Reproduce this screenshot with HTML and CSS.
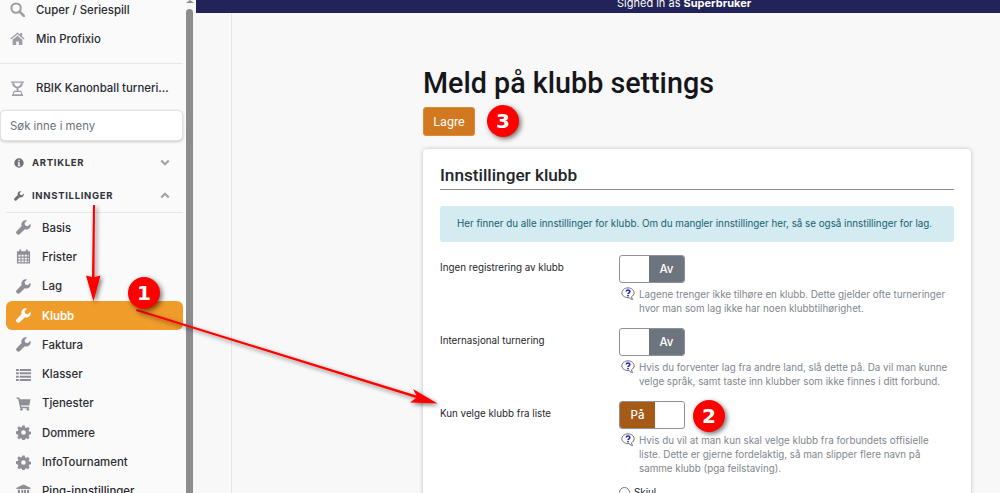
FILE: index.html
```html
<!DOCTYPE html>
<html>
<head>
  <meta charset="UTF-8" />
  <title>Meld på klubb settings</title>
  <link rel="stylesheet" href="styles.css">
</head>
<body>
  <svg class="icon-defs" width="0" height="0">
    <defs>
      <symbol id="i-search" viewBox="0 0 16 16"><circle cx="6.5" cy="6.5" r="5" fill="none" stroke="currentColor" stroke-width="2.2"/><path d="M10.3 10.3 15 15" stroke="currentColor" stroke-width="2.8" stroke-linecap="round"/></symbol>
      <symbol id="i-home" viewBox="0 0 16 16"><path fill="currentColor" d="M8 1.5.4 8l.8 1L8 3.4 14.8 9l.8-1-2.6-2.2V2.2h-2v1.9zM2.8 9.4V15h3.8v-3.8h2.8V15h3.8V9.4L8 5z"/></symbol>
      <symbol id="i-trophy" viewBox="0 0 16 16"><path fill="none" stroke="currentColor" stroke-width="1.2" d="M1 1.200h14M3 1.200c0 2.800 0 5.300 5 6.300 5-1 5-3.500 5-6.300M4 2.500c0 2 .5 3.500 4 4.300 3.500-.8 4-2.300 4-4.300"/><path fill="currentColor" d="M7 7.500h2v3H7z"/><path fill="none" stroke="currentColor" stroke-width="1.200" d="M4.500 11h7l1.500 3.800H3zM2 15.300h12"/></symbol>
      <symbol id="i-info" viewBox="0 0 16 16"><path fill="currentColor" fill-rule="evenodd" d="M8 .5a7.500 7.500 0 1 0 0 15 7.500 7.500 0 0 0 0-15zM6.800 2.800h2.400v2.400H6.800zM5.800 6.600h3.400v5h1v1.600H5.800v-1.600h1v-3.400h-1z"/></symbol>
      <symbol id="i-wrench" viewBox="0 0 16 16"><path fill="currentColor" d="M15.300 3.900 12.500 6.600 9.800 5.900 9.100 3.300 11.900.6A4.600 4.600 0 0 0 6 6.500L.9 11.600a2.100 2.100 0 0 0 3.300 3.300L9.400 9.900a4.600 4.600 0 0 0 5.900-6z"/></symbol>
      <symbol id="i-calendar" viewBox="0 0 16 16"><path fill="currentColor" fill-rule="evenodd" d="M3.500.500h2v2h5v-2h2v2H15v13H1v-13h2.500zM2.500 6v2h2.300V6zm3.400 0v2h2.300V6zm3.400 0v2h2.300V6zm3.300 0v2h.9V6zM2.500 9.200v2h2.300v-2zm3.400 0v2h2.300v-2zm3.400 0v2h2.300v-2zm3.300 0v2h.9v-2zM2.500 12.300v1.800h2.300v-1.800zm3.400 0v1.800h2.300v-1.800zm3.400 0v1.800h2.300v-1.800zm3.300 0v1.800h.9v-1.800z"/></symbol>
      <symbol id="i-list" viewBox="0 0 16 16"><path fill="currentColor" d="M0 2h3v2.200H0zM4 2h12v2.200H4zM0 5.600h3v2.200H0zM4 5.600h12v2.200H4zM0 9.200h3v2.200H0zM4 9.200h12v2.200H4zM0 12.800h3V15H0zM4 12.800h12V15H4z"/></symbol>
      <symbol id="i-cart" viewBox="0 0 16 16"><path fill="currentColor" d="M.5 1.500h3l.5 2h11.500l-1.300 6.500H5.500l.3 1.500h8.200v1.500H4.500L2.300 3H.5z"/><circle cx="5.800" cy="14.200" r="1.400" fill="currentColor"/><circle cx="12.600" cy="14.200" r="1.400" fill="currentColor"/></symbol>
      <symbol id="i-gear" viewBox="0 0 16 16"><path fill="currentColor" fill-rule="evenodd" d="M6.700.5h2.600l.4 2.100 1.300.6 1.800-1.200 1.800 1.800-1.200 1.800.6 1.300 2.100.4v2.600l-2.100.4-.6 1.300 1.200 1.800-1.800 1.800-1.800-1.200-1.300.6-.4 2.100H6.700l-.4-2.100-1.300-.6-1.800 1.200-1.800-1.800 1.200-1.800-.6-1.300L-.1 9.300V6.700L2 6.300l.6-1.300L1.400 3.200l1.800-1.800L5 2.600l1.300-.6zM8 5.500a2.500 2.500 0 1 0 0 5 2.500 2.500 0 0 0 0-5z"/></symbol>
      <symbol id="i-bank" viewBox="0 0 16 16"><path fill="currentColor" d="M8 .5 15.500 4v1.200H.5V4zM2 6h2.200v6H2zM5.700 6h2v6h-2zM8.600 6h2v6h-2zM11.800 6H14v6h-2.200zM1 13h14v2H1z"/></symbol>
      <symbol id="i-help" viewBox="0 0 16 16"><path fill="#fff" stroke="#666" stroke-width="1.100" d="M8 1c3.900 0 7 2.500 7 5.600 0 2-1.200 3.600-3 4.600.1 1.200.6 2.300 1.400 3.100-1.700-.2-3.300-1-4.300-2.200H8C4.100 12.100 1 9.700 1 6.600S4.100 1 8 1z"/><path fill="none" stroke="#1a22c8" stroke-width="1.700" d="M5.900 5.100c.2-2.200 4.200-2.200 4.200 0 0 1.500-2.100 1.500-2.100 3"/><rect x="7.100" y="9" width="1.800" height="1.700" fill="#1a22c8"/></symbol>
    </defs>
  </svg>

  <div class="page">
    <aside class="sidebar">
      <nav class="top-links">
        <a class="top-link"><svg class="ico ico-light"><use href="#i-search"/></svg>Cuper / Seriespill</a>
        <a class="top-link"><svg class="ico ico-light"><use href="#i-home"/></svg>Min Profixio</a>
      </nav>
      <div class="tournament"><svg class="ico ico-light"><use href="#i-trophy"/></svg>RBIK Kanonball turneri...</div>
      <input class="menu-search" type="text" placeholder="Søk inne i meny">
      <div class="section-head">
        <svg class="ico-sm"><use href="#i-info"/></svg><span>ARTIKLER</span>
        <svg class="chev" viewBox="0 0 12 8"><path d="M1.500 1.500 6 6l4.500-4.500" fill="none" stroke="currentColor" stroke-width="2.600"/></svg>
      </div>
      <div class="section-head open">
        <svg class="ico-sm"><use href="#i-wrench"/></svg><span>INNSTILLINGER</span>
        <svg class="chev" viewBox="0 0 12 8"><path d="M1.500 6.500 6 2l4.500 4.500" fill="none" stroke="currentColor" stroke-width="2.600"/></svg>
      </div>
      <ul class="menu">
        <li><svg class="ico"><use href="#i-wrench"/></svg>Basis</li>
        <li><svg class="ico"><use href="#i-calendar"/></svg>Frister</li>
        <li><svg class="ico"><use href="#i-wrench"/></svg>Lag</li>
        <li class="active"><svg class="ico"><use href="#i-wrench"/></svg>Klubb</li>
        <li><svg class="ico"><use href="#i-wrench"/></svg>Faktura</li>
        <li><svg class="ico"><use href="#i-list"/></svg>Klasser</li>
        <li><svg class="ico"><use href="#i-cart"/></svg>Tjenester</li>
        <li><svg class="ico"><use href="#i-gear"/></svg>Dommere</li>
        <li><svg class="ico"><use href="#i-gear"/></svg>InfoTournament</li>
        <li><svg class="ico"><use href="#i-bank"/></svg>Ping-innstillinger</li>
      </ul>
    </aside>
    <div class="scrollbar"><span class="scroll-up"></span><span class="scroll-thumb"></span></div>

    <main class="main">
      <div class="topbar"><span>Signed in as <b>Superbruker</b></span></div>
      <div class="content">
        <h1>Meld på klubb settings</h1>
        <button class="save-btn" type="button">Lagre</button>
        <section class="card">
          <h2>Innstillinger klubb</h2>
          <div class="alert">Her finner du alle innstillinger for klubb. Om du mangler innstillinger her, så se også innstillinger for lag.</div>

          <div class="row">
            <label>Ingen registrering av klubb</label>
            <div>
              <div class="toggle"><span class="blank"></span><span class="off">Av</span></div>
              <div class="help"><svg class="help-ico"><use href="#i-help"/></svg><p>Lagene trenger ikke tilhøre en klubb. Dette gjelder ofte turneringer hvor man som lag ikke har noen klubbtilhørighet.</p></div>
            </div>
          </div>

          <div class="row">
            <label>Internasjonal turnering</label>
            <div>
              <div class="toggle"><span class="blank"></span><span class="off">Av</span></div>
              <div class="help"><svg class="help-ico"><use href="#i-help"/></svg><p>Hvis du forventer lag fra andre land, slå dette på. Da vil man kunne velge språk, samt taste inn klubber som ikke finnes i ditt forbund.</p></div>
            </div>
          </div>

          <div class="row">
            <label>Kun velge klubb fra liste</label>
            <div>
              <div class="toggle"><span class="on">På</span><span class="blank"></span></div>
              <div class="help"><svg class="help-ico"><use href="#i-help"/></svg><p>Hvis du vil at man kun skal velge klubb fra forbundets offisielle liste. Dette er gjerne fordelaktig, så man slipper flere navn på samme klubb (pga feilstaving).</p></div>
              <label class="radio"><input type="radio" name="k"> Skjul</label>
            </div>
          </div>
        </section>
      </div>
    </main>
  </div>

  <!-- annotations drawn on top of the screenshot -->
  <svg class="arrows" width="1000" height="493" viewBox="0 0 1000 493">
    <defs>
      <filter id="arrow-shadow" x="-20%" y="-20%" width="140%" height="140%"><feDropShadow dx="2" dy="2" stdDeviation="2" flood-color="#000" flood-opacity=".5"/></filter>
    </defs>
    <g filter="url(#arrow-shadow)" fill="#f00">
      <path d="M93 205h2l-.5 72 6-1.500-7 26-7.500-26 6 1.500z"/>
      <path d="M136 311l.6-2 279.900 86.500-3.500-6.500 24.500 14.500-27.500-1 6-4.500z"/>
    </g>
  </svg>
  <span class="badge badge-1">1</span>
  <span class="badge badge-2">2</span>
  <span class="badge badge-3">3</span>
</body>
</html>
```

FILE: styles.css
```css
* {
  box-sizing: border-box;
}

html, body {
  height: 493px;
  overflow: hidden;
}

body {
  margin: 0;
  font-family: Inter, "Liberation Sans", sans-serif;
  background-color: #f8f8f8;
  color: #212529;
}

.icon-defs {
  position: absolute;
}

.page {
  display: flex;
  height: 493px;
}

/* sidebar */
.sidebar {
  width: 186px;
  flex-shrink: 0;
  background-color: #fafafa;
  overflow: hidden;
}

.top-links {
  margin-top: -5px;
  padding-bottom: 10px;
  border-bottom: 1px solid #e6e6e6;
  margin-right: 3px;
}

.top-link {
  display: flex;
  align-items: center;
  gap: 11px;
  height: 29px;
  padding-left: 10px;
  font-size: 11.4px;
  font-weight: 500;
  color: #2b2b33;
}

.ico {
  width: 15px;
  height: 15px;
  color: #8e8e97;
  flex-shrink: 0;
}

.ico-light {
  color: #9d9da5;
}

.tournament {
  display: flex;
  align-items: center;
  gap: 11px;
  height: 24px;
  margin-top: 12px;
  padding-left: 10px;
  font-size: 11.4px;
  font-weight: 500;
  color: #2b2b33;
}

.menu-search {
  display: block;
  width: 183px;
  height: 31px;
  margin-top: 10px;
  margin-bottom: 5px;
  padding: 0 9px;
  border: 1px solid #e2e2e2;
  border-radius: 5px;
  background-color: #fff;
  box-shadow: 0 1px 3px rgba(0,0,0,.2);
  font-family: Inter, sans-serif;
  font-size: 11.4px;
}

.menu-search::placeholder {
  color: #6c727a;
}

.section-head {
  display: flex;
  align-items: center;
  height: 33px;
  padding: 0 16px 0 14px;
  font-size: 9.5px;
  font-weight: 700;
  letter-spacing: .7px;
  color: #33333b;
}

.section-head span {
  flex: 1;
  padding-left: 8px;
}

.section-head.open {
  height: 34px;
  margin-left: 6px;
  margin-right: 3px;
  padding-left: 8px;
  padding-right: 13px;
  border-bottom: 1px solid #e6e6e6;
}

.ico-sm {
  width: 10px;
  height: 10px;
  color: #6f6f78;
}

.chev {
  width: 10px;
  height: 7px;
  color: #a3a3ab;
}

.menu {
  list-style: none;
  margin: 0;
  padding: 0;
}

.menu li {
  display: flex;
  align-items: center;
  gap: 11px;
  height: 29.3px;
  margin: 0 3px 0 6px;
  padding-left: 10px;
  border-radius: 6px;
  font-size: 11.4px;
  font-weight: 500;
  color: #2b2b33;
}

.menu li.active {
  background-color: #f09c2a;
  color: #fff;
  font-weight: 600;
}

.menu li.active .ico {
  color: #fff;
}

/* fake scrollbar */
.scrollbar {
  width: 10px;
  flex-shrink: 0;
  display: flex;
  flex-direction: column;
  align-items: center;
  padding-right: 3px;
  background-color: #f7f7f7;
}

.scroll-up {
  width: 0;
  height: 0;
  border-left: 4px solid transparent;
  border-right: 4px solid transparent;
  border-bottom: 3px solid #8c8c8c;
}

.scroll-thumb {
  flex: 1;
  width: 7px;
  margin-top: 6px;
  border-radius: 4px 4px 0 0;
  background-color: #8c8c8c;
}

/* main */
.main {
  flex: 1;
  min-width: 0;
}

.topbar {
  height: 13px;
  overflow: hidden;
  background-color: #222359;
  color: #fff;
  font-size: 11px;
  line-height: 7px;
  padding-left: 421px;
}

.content {
  height: 480px;
  margin-left: 35px;
  border-left: 1px solid #e6e6e6;
  padding: 54px 29px 0 191px;
  overflow: hidden;
}

h1 {
  margin: 0;
  font-family: Roboto, sans-serif;
  font-size: 28.7px;
  font-weight: 500;
  line-height: 32px;
  color: #16161a;
}

.save-btn {
  display: block;
  width: 52px;
  height: 29px;
  margin-top: 8px;
  padding: 0;
  border: 1px solid #dc8a35;
  border-radius: 3px;
  background-color: #d27821;
  color: #fff;
  font-family: Roboto, sans-serif;
  font-size: 12.5px;
}

.card {
  margin-top: 13px;
  padding: 14px 17px 0;
  height: 400px;
  border-radius: 4px;
  background-color: #fff;
  box-shadow: 0 0 4px rgba(0,0,0,.22);
}

h2 {
  margin: 0;
  padding-top: 1px;
  padding-bottom: 2px;
  border-bottom: 1px solid #8c8c8c;
  font-family: Roboto, sans-serif;
  font-size: 17.2px;
  font-weight: 500;
  line-height: 23px;
  color: #212529;
}

.alert {
  height: 36px;
  margin-top: 16px;
  margin-bottom: 13px;
  padding-left: 17px;
  border-radius: 3px;
  background-color: #d3ebf1;
  color: #17616f;
  font-size: 9.8px;
  line-height: 35px;
  white-space: nowrap;
}

.row {
  display: grid;
  grid-template-columns: 179px 1fr;
  min-height: 73px;
}

.row > label {
  padding-top: 6px;
  font-size: 9.8px;
  line-height: 13px;
  color: #26262c;
}

.toggle {
  display: flex;
  width: 66px;
  height: 28px;
  border: 1px solid #8d9298;
  border-radius: 3px;
  overflow: hidden;
  background-color: #fff;
  font-size: 11.5px;
  font-weight: 500;
  line-height: 26px;
  text-align: center;
  color: #fff;
}

.toggle .blank {
  flex: 1;
}

.toggle .off {
  width: 35px;
  background-color: #6c757d;
}

.toggle .on {
  width: 35px;
  background-color: #a65a17;
}

.help {
  display: flex;
  gap: 4px;
  margin-top: 5px;
  margin-left: 2px;
}

.help-ico {
  width: 14px;
  height: 14px;
  margin-top: -1px;
  flex-shrink: 0;
}

.help p {
  max-width: 310px;
  margin: 0;
  font-size: 9.8px;
  line-height: 14px;
  color: #80868d;
}

.radio {
  display: flex;
  align-items: center;
  gap: 4px;
  margin-top: 11px;
  font-size: 9.8px;
}

.radio input {
  width: 11px;
  height: 11px;
  margin: 0;
}

/* annotations */
.arrows {
  position: absolute;
  left: 0;
  top: 0;
  pointer-events: none;
}

.badge {
  position: absolute;
  width: 32px;
  height: 32px;
  border-radius: 50%;
  background-color: #f00;
  box-shadow: 2px 2px 5px rgba(0,0,0,.55);
  color: #fff;
  font-family: "DejaVu Sans", sans-serif;
  font-size: 20px;
  font-weight: 700;
  line-height: 32px;
  text-align: center;
}

.badge-1 { left: 128px; top: 277px; }
.badge-2 { left: 693px; top: 400px; }
.badge-3 { left: 487px; top: 105px; }
```
